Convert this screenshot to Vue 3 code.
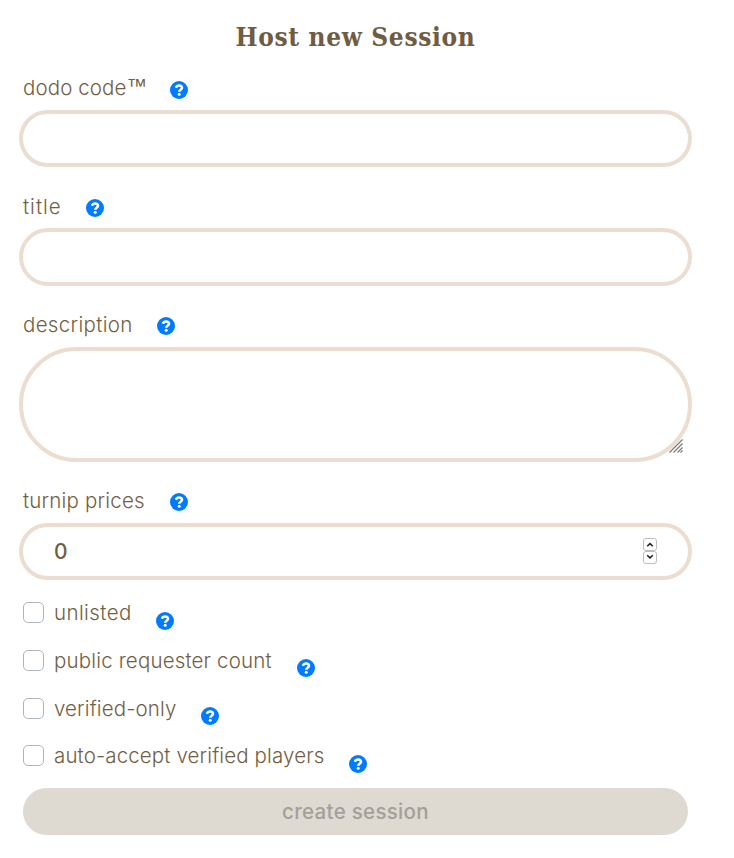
<script setup>
import { ref } from 'vue'

const fields = [
  { id: 'dodo', label: 'dodo code', mark: '™', width: 147, spacing: 0.1, kind: 'text' },
  { id: 'title', label: 'title', width: 63, spacing: 1, kind: 'text' },
  { id: 'description', label: 'description', width: 134, spacing: 0.32, kind: 'area' },
  { id: 'turnip', label: 'turnip prices', width: 146.5, spacing: 0.19, kind: 'number' },
]
const options = [
  { id: 'unlisted', label: 'unlisted', width: 102, spacing: 0.4 },
  { id: 'public', label: 'public requester count', width: 243, spacing: 0.16 },
  { id: 'verified', label: 'verified-only', width: 147, spacing: 0.11 },
  { id: 'auto', label: 'auto-accept verified players', width: 295, spacing: 0.12 },
]
const price = ref(0)
</script>

<template>
  <form class="session" @submit.prevent>
    <h1 class="heading">Host new Session</h1>

    <div v-for="f in fields" :key="f.id" class="field" :class="f.id">
      <div class="label-row">
        <label class="label" :for="f.id" :style="{ width: f.width + 'px', letterSpacing: f.spacing + 'px' }">{{ f.label }}<span v-if="f.mark" class="mark">{{ f.mark }}</span></label>
        <svg class="help" viewBox="0 0 18 18">
          <circle cx="9" cy="9" r="9" />
          <path class="hook" d="M5.900 6.700C6.500 5.200 7.500 4.500 9 4.500c1.800 0 3 .9 3 2.300 0 2-2.700 1.900-2.700 3.900" />
          <circle class="dot" cx="9.200" cy="13.300" r="1.500" />
        </svg>
      </div>
      <textarea v-if="f.kind === 'area'" :id="f.id" class="box area"></textarea>
      <div v-else-if="f.kind === 'number'" class="box number">
        <input :id="f.id" v-model="price" class="value" inputmode="numeric" />
        <div class="spinner">
          <button type="button" class="step" @click="price++">
            <svg viewBox="0 0 12 11"><path d="M3.200 7.300 6 4.600l2.800 2.700" /></svg>
          </button>
          <button type="button" class="step" @click="price--">
            <svg viewBox="0 0 12 11"><path d="M3.200 3.200 6 5.900l2.800-2.700" /></svg>
          </button>
        </div>
      </div>
      <input v-else :id="f.id" class="box" type="text" />
      <svg v-if="f.kind === 'area'" class="grip" viewBox="0 0 14 14">
        <path d="M.5 13.500l13-13M4.500 13.500l9-9M8.500 13.500l5-5M11.500 13.500l2-2" />
      </svg>
    </div>

    <div class="options">
      <div v-for="o in options" :key="o.id" class="option">
        <input :id="o.id" class="check" type="checkbox" />
        <label class="label" :for="o.id" :style="{ width: o.width + 'px', letterSpacing: o.spacing + 'px' }">{{ o.label }}</label>
        <svg class="help" viewBox="0 0 18 18">
          <circle cx="9" cy="9" r="9" />
          <path class="hook" d="M5.900 6.700C6.500 5.200 7.500 4.500 9 4.500c1.800 0 3 .9 3 2.300 0 2-2.700 1.900-2.700 3.900" />
          <circle class="dot" cx="9.200" cy="13.300" r="1.500" />
        </svg>
      </div>
    </div>

    <button class="submit" disabled>create session</button>
  </form>
</template>

<style>
body {
  background: #fff;
}
</style>

<style scoped>
.session {
  box-sizing: border-box;
  width: 734px;
  height: 858px;
  padding: 17px 42px 0 19px;
  font-family: "Inter", "Liberation Sans", sans-serif;
  color: #725e43;
}
.heading {
  margin: 0;
  height: 57px;
  line-height: 40px;
  text-align: center;
  font-family: "DejaVu Serif", serif;
  font-stretch: condensed;
  font-weight: 700;
  font-size: 26px;
  letter-spacing: 0.650px;
  color: #6f5c43;
  white-space: nowrap;
}
.field {
  position: relative;
  height: 118.300px;
}
.title .label {
  line-height: 29px;
}
.title .box {
  height: 57.700px;
}
.description {
  height: 176.400px;
}
.turnip {
  height: 109px;
}
.label-row {
  display: flex;
  align-items: flex-start;
  height: 36px;
  padding-left: 4px;
}
.label {
  flex: none;
  line-height: 27px;
  font-size: 20.500px;
  font-weight: 350;
  white-space: nowrap;
}
.mark {
  font-family: "Liberation Sans", sans-serif;
  font-size: 20.500px;
  line-height: 0;
  vertical-align: 2px;
}
.help {
  flex: none;
  width: 18px;
  height: 18px;
  margin-top: 6.500px;
  fill: #007bff;
}
.hook {
  fill: none;
  stroke: #fff;
  stroke-width: 2.600;
}
.dot {
  fill: #fff;
}
.box {
  display: block;
  box-sizing: border-box;
  width: 673px;
  height: 57px;
  margin: 0;
  padding: 0 31px;
  border: 4px solid #ecddd1;
  border-radius: 29px;
  background: #fff;
  outline: none;
}
.area {
  height: 115px;
  border-radius: 58px;
  resize: none;
}
.number {
  display: flex;
  align-items: center;
  justify-content: space-between;
}
.value {
  width: 200px;
  padding: 0;
  border: 0;
  outline: none;
  background: none;
  font: 500 21px "Inter", "Liberation Sans", sans-serif;
  color: #725e43;
}
.spinner {
  display: flex;
  flex-direction: column;
  width: 14px;
  margin-bottom: 1px;
}
.step {
  box-sizing: border-box;
  width: 14px;
  height: 13px;
  padding: 0;
  border: 1px solid #bdbdbd;
  border-radius: 3px;
  background: #fff;
}
.step svg {
  display: block;
  width: 12px;
  height: 11px;
  fill: none;
  stroke: #222;
  stroke-width: 1.500;
}
.grip {
  position: absolute;
  right: 9px;
  top: 128.500px;
  width: 14px;
  height: 14px;
  fill: none;
  stroke: #777;
  stroke-width: 1.200;
}
.options {
  display: flex;
  flex-direction: column;
  gap: 19.700px;
  padding: 3.200px 0 0 4px;
}
.option {
  display: flex;
  height: 28px;
}
.option .help {
  margin-top: 12.500px;
}
.check {
  appearance: none;
  box-sizing: border-box;
  flex: none;
  width: 21px;
  height: 21px;
  margin: 3px 10px 0 0;
  border: 1px solid #adb5bd;
  border-radius: 5px;
  background: #fff;
}
.submit {
  display: block;
  box-sizing: border-box;
  width: 665px;
  height: 47px;
  margin: 17.800px 0 0 4px;
  padding: 0;
  border: 0;
  border-radius: 24px;
  background: #ded9d1;
  color: #a39f9b;
  font: 450 20.500px "Inter", "Liberation Sans", sans-serif;
  line-height: 47px;
  letter-spacing: 0.300px;
}
</style>
